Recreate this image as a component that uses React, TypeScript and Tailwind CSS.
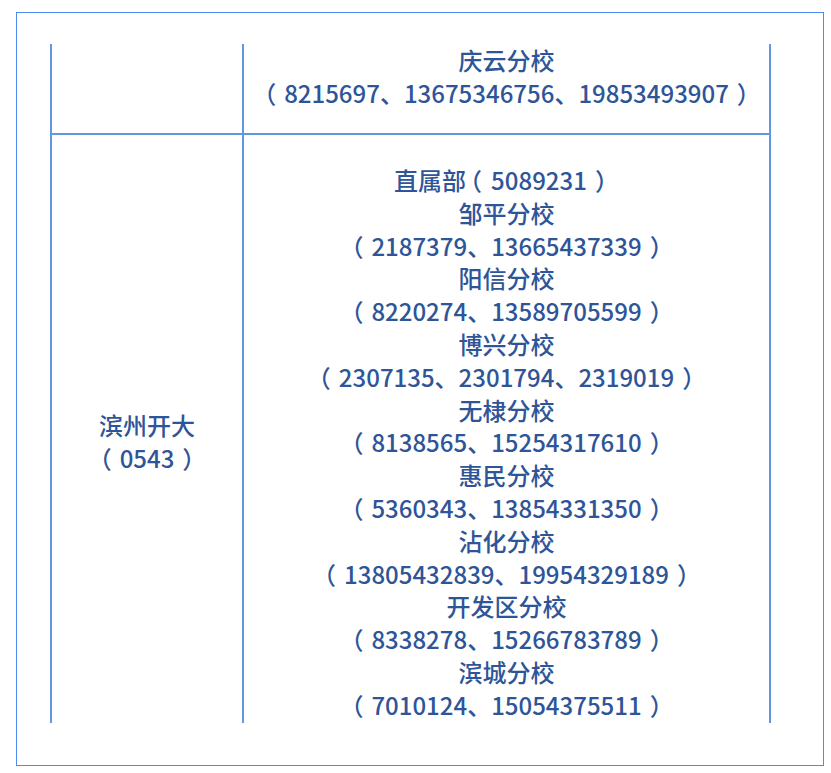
import React from "react";

const O = ({ tight }: { tight?: boolean }) => (
  <span className={tight ? "ml-[-8px] mr-[9px]" : "mr-[8px]"}>（</span>
);
const C = () => <span className="ml-[8px]">）</span>;

function Nums({ parts, lead }: { parts: string[]; lead?: string }) {
  return (
    <div className="whitespace-nowrap">
      {lead}
      <O tight={!!lead} />
      {parts.join("、")}
      <C />
    </div>
  );
}

const rows2: (string | { lead?: string; parts: string[] })[] = [
  { lead: "直属部", parts: ["5089231"] },
  "邹平分校",
  { parts: ["2187379", "13665437339"] },
  "阳信分校",
  { parts: ["8220274", "13589705599"] },
  "博兴分校",
  { parts: ["2307135", "2301794", "2319019"] },
  "无棣分校",
  { parts: ["8138565", "15254317610"] },
  "惠民分校",
  { parts: ["5360343", "13854331350"] },
  "沾化分校",
  { parts: ["13805432839", "19954329189"] },
  "开发区分校",
  { parts: ["8338278", "15266783789"] },
  "滨城分校",
  { parts: ["7010124", "15054375511"] },
];

export default function App() {
  return (
    <div
      className="w-[831px] h-[773px] bg-white pt-[12px] pl-[16px] text-[#2e5597] text-[24px] font-medium leading-[32.8px]"
      style={{ fontFamily: '"Microsoft YaHei", "Noto Sans CJK SC", sans-serif' }}
    >
      <div className="w-[808px] h-[754px] border border-[#4d8af0] pt-[31px] pl-[33px]">
        <div className="w-[721px] h-[679px] overflow-hidden">
          <div className="flex h-[91px] border-b-2 border-[#6097e0]">
            <div className="w-[192px] border-l-2 border-[#6097e0]" />
            <div className="w-[529px] border-l-2 border-r-2 border-[#6097e0] flex flex-col items-center pt-0">
              <div>庆云分校</div>
              <Nums parts={["8215697", "13675346756", "19853493907"]} />
            </div>
          </div>
          <div className="flex h-[614px]">
            <div className="w-[192px] border-l-2 border-[#6097e0] flex flex-col items-center justify-center">
              <div>滨州开大</div>
              <Nums parts={["0543"]} />
            </div>
            <div className="w-[529px] border-l-2 border-r-2 border-[#6097e0] flex flex-col items-center pt-[29px]">
              {rows2.map((r, i) =>
                typeof r === "string" ? (
                  <div key={i}>{r}</div>
                ) : (
                  <Nums key={i} lead={r.lead} parts={r.parts} />
                )
              )}
            </div>
          </div>
        </div>
      </div>
    </div>
  );
}
